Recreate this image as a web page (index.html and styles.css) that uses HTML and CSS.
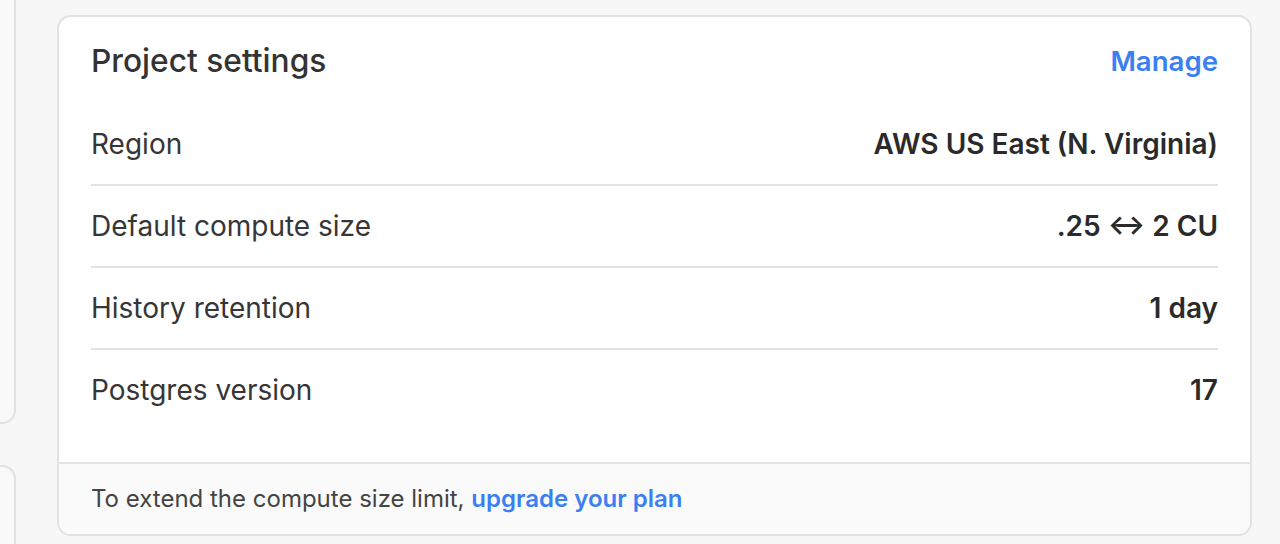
FILE: index.html
```html
<!DOCTYPE html>
<html lang="en">
<head>
<meta charset="utf-8">
<title>Project settings</title>
<link rel="stylesheet" href="styles.css">
</head>
<body>
<div class="page">
  <div class="side">
    <div class="side-card side-card-top"></div>
    <div class="side-card side-card-bottom"></div>
  </div>
  <section class="card">
    <div class="card-body">
      <header class="card-header">
        <h2 class="title">Project settings</h2>
        <a class="link manage" href="#">Manage</a>
      </header>
      <div class="row">
        <span class="label">Region</span>
        <span class="value">AWS US East (N. Virginia)</span>
      </div>
      <div class="row">
        <span class="label">Default compute size</span>
        <span class="value">.25 ↔ 2 CU</span>
      </div>
      <div class="row">
        <span class="label">History retention</span>
        <span class="value">1 day</span>
      </div>
      <div class="row">
        <span class="label">Postgres version</span>
        <span class="value">17</span>
      </div>
    </div>
    <footer class="card-footer">To extend the compute size limit, <a class="link" href="#">upgrade your plan</a></footer>
  </section>
</div>
</body>
</html>
```
FILE: styles.css
```css
* { box-sizing: border-box; }
html, body { margin: 0; padding: 0; }
body {
  background: #f7f7f7;
  font-family: Inter, "Noto Sans", "Liberation Sans", sans-serif;
  color: #333333;
  width: 1280px;
  height: 544px;
  overflow: hidden;
}
.page {
  display: flex;
  align-items: flex-start;
  gap: 41px;
  padding: 15px 28px 0 0;
  height: 544px;
  overflow: hidden;
}
.side {
  width: 16px;
  flex: none;
  display: flex;
  flex-direction: column;
  gap: 41px;
  margin-top: -15px;
}
.side-card {
  background: #f9f9f9;
  border: 2px solid #e2e2e2;
  border-left: none;
}
.side-card-top { height: 424px; border-top: none; border-radius: 0 0 14px 0; }
.side-card-bottom { height: 79px; border-bottom: none; border-radius: 0 14px 0 0; }
.card {
  flex: 1;
  background: #ffffff;
  border: 2px solid #e2e2e2;
  border-radius: 14px;
  overflow: hidden;
}
.card-body {
  padding: 0 32px 32px;
}
.card-header {
  height: 87px;
  display: flex;
  align-items: center;
  justify-content: space-between;
}
.title {
  margin: 0;
  font-size: 31.7px;
  font-weight: 500;
  color: #333333;
}
.link {
  color: #3b7ff2;
  text-decoration: none;
  font-weight: 600;
}
.manage { font-size: 27.6px; }
.row {
  height: 82px;
  display: flex;
  align-items: center;
  justify-content: space-between;
  border-bottom: 2px solid #e3e3e3;
  font-size: 28px;
}
.row:last-child { border-bottom: none; height: 80px; }
.label { color: #363636; }
.value { font-weight: 600; color: #2a2a2a; }
.card-footer {
  background: #fafafa;
  border-top: 2px solid #e3e3e3;
  height: 72px;
  line-height: 70px;
  padding: 0 32px;
  font-size: 24px;
  color: #444444;
}
```
